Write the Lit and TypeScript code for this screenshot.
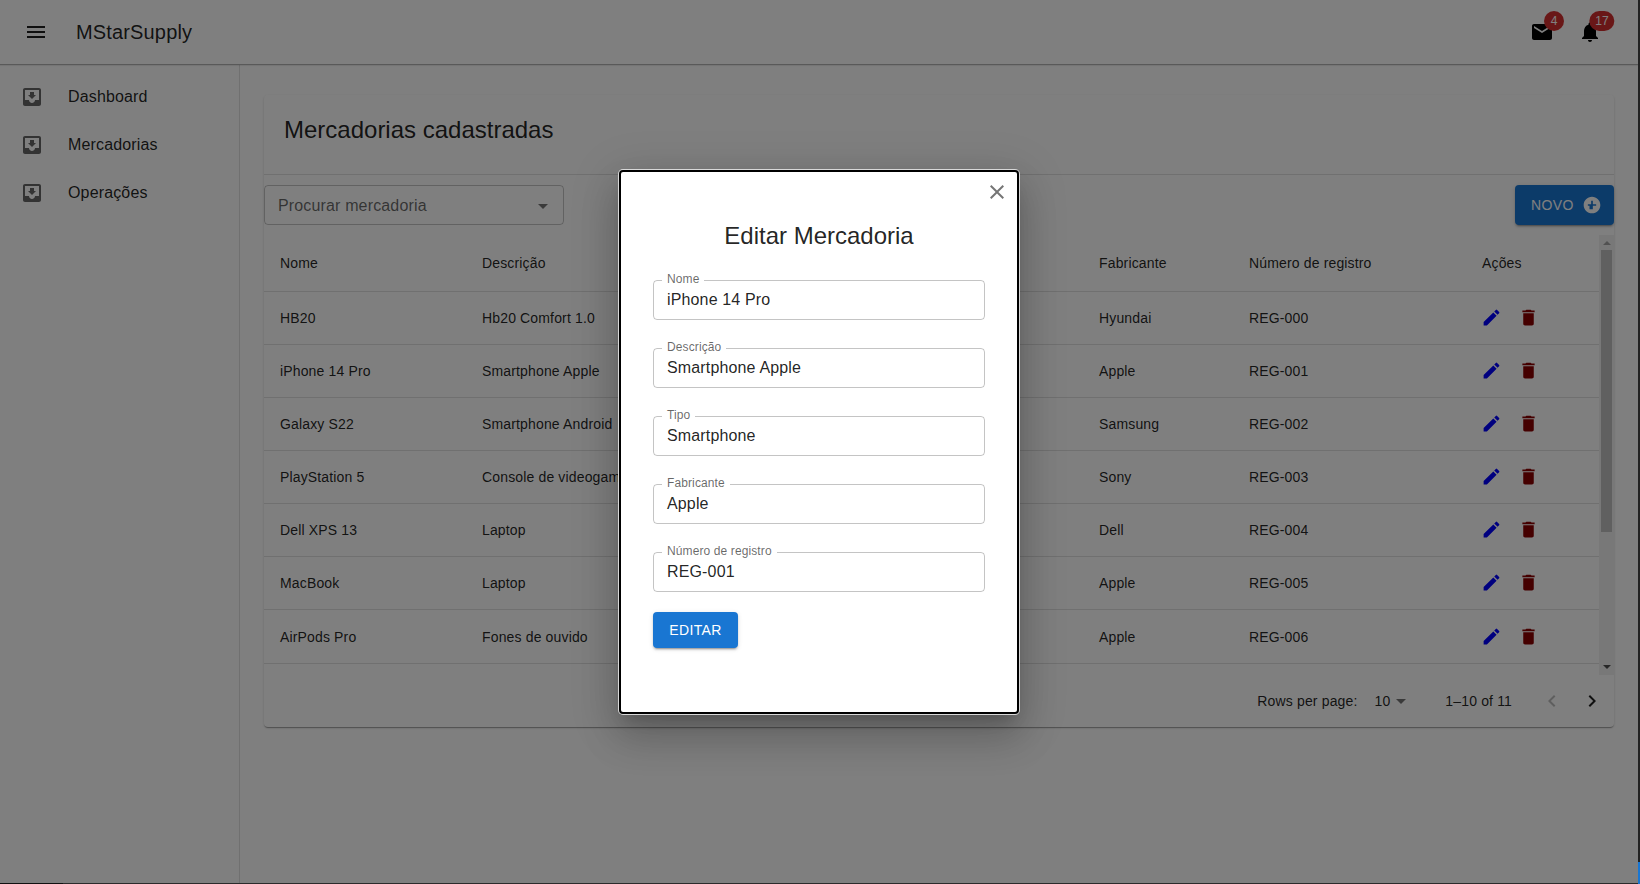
import { LitElement, html, css, svg } from "lit";
import { customElement } from "lit/decorators.js";

const icon = (d: string, cls = "") =>
  html`<svg class="icon ${cls}" viewBox="0 0 24 24">${svg`<path d=${d}></path>`}</svg>`;

const MENU = "M3 18h18v-2H3v2zm0-5h18v-2H3v2zm0-7v2h18V6H3z";
const INBOX =
  "M19 3H4.99c-1.11 0-1.98.89-1.98 2L3 19c0 1.1.88 2 1.99 2H19c1.1 0 2-.9 2-2V5c0-1.11-.9-2-2-2zm0 12h-4c0 1.66-1.35 3-3 3s-3-1.34-3-3H4.99V5H19v10zm-3-5h-2V7h-4v3H8l4 4 4-4z";
const MAIL =
  "M20 4H4c-1.1 0-1.99.9-1.99 2L2 18c0 1.1.9 2 2 2h16c1.1 0 2-.9 2-2V6c0-1.1-.9-2-2-2zm0 4l-8 5-8-5V6l8 5 8-5v2z";
const BELL =
  "M12 22c1.1 0 2-.9 2-2h-4c0 1.1.89 2 2 2zm6-6v-5c0-3.07-1.64-5.64-4.5-6.32V4c0-.83-.67-1.5-1.5-1.5s-1.5.67-1.5 1.5v.68C7.63 5.36 6 7.92 6 11v5l-2 2v1h16v-1l-2-2z";
const EDIT =
  "M3 17.25V21h3.75L17.81 9.94l-3.75-3.75L3 17.25zM20.71 7.04c.39-.39.39-1.02 0-1.41l-2.34-2.34a.9959.9959 0 0 0-1.41 0l-1.83 1.83 3.75 3.75 1.83-1.83z";
const TRASH = "M6 19c0 1.1.9 2 2 2h8c1.1 0 2-.9 2-2V7H6v12zM19 4h-3.5l-1-1h-5l-1 1H5v2h14V4z";
const CLOSE =
  "M19 6.41 17.59 5 12 10.59 6.41 5 5 6.41 10.59 12 5 17.59 6.41 19 12 13.41 17.59 19 19 17.59 13.41 12z";
const ADD = "M12 2C6.48 2 2 6.48 2 12s4.48 10 10 10 10-4.48 10-10S17.52 2 12 2zm5 11h-4v4h-4v-4H7v-2h4V7h2v4h4v2z";
const DROP = "M7 10l5 5 5-5z";
const LEFT = "M15.41 16.59 10.83 12l4.58-4.59L14 6l-6 6 6 6 1.41-1.41z";
const RIGHT = "M8.59 16.59 13.17 12 8.59 7.41 10 6l6 6-6 6-1.41-1.41z";

const NAV = ["Dashboard", "Mercadorias", "Operações"];

const ROWS = [
  ["HB20", "Hb20 Comfort 1.0", "Hyundai", "REG-000"],
  ["iPhone 14 Pro", "Smartphone Apple", "Apple", "REG-001"],
  ["Galaxy S22", "Smartphone Android", "Samsung", "REG-002"],
  ["PlayStation 5", "Console de videogame", "Sony", "REG-003"],
  ["Dell XPS 13", "Laptop", "Dell", "REG-004"],
  ["MacBook", "Laptop", "Apple", "REG-005"],
  ["AirPods Pro", "Fones de ouvido", "Apple", "REG-006"],
];

const FIELDS = [
  ["Nome", "iPhone 14 Pro"],
  ["Descrição", "Smartphone Apple"],
  ["Tipo", "Smartphone"],
  ["Fabricante", "Apple"],
  ["Número de registro", "REG-001"],
];

@customElement("app-root")
export class AppRoot extends LitElement {
  static styles = css`
    :host {
      display: block;
      position: relative;
      width: 1640px;
      height: 884px;
      overflow: hidden;
      background: #fff;
      color: rgba(0, 0, 0, 0.87);
      font-family: "Liberation Sans", Arial, sans-serif;
      font-size: 14px;
      letter-spacing: 0.15px;
    }
    .icon {
      display: block;
      width: 24px;
      height: 24px;
      fill: currentColor;
      flex: none;
    }

    .appbar {
      height: 64px;
      display: flex;
      align-items: center;
      padding: 0 38px 0 24px;
      border-bottom: 1px solid rgba(0, 0, 0, 0.3);
      box-shadow: 0 1px 1px rgba(0, 0, 0, 0.08);
      position: relative;
    }
    .appbar__title {
      font-size: 20px;
      margin-left: 28px;
      flex: 1;
    }
    .appbar__action {
      position: relative;
      margin-left: 24px;
      color: #000;
    }
    .badge {
      position: absolute;
      top: -9px;
      left: 24px;
      transform: translateX(-50%);
      min-width: 20px;
      height: 20px;
      padding: 0 6px;
      box-sizing: border-box;
      border-radius: 10px;
      background: #d32f2f;
      color: #fff;
      font-size: 12px;
      line-height: 20px;
      letter-spacing: 0;
      text-align: center;
    }

    .layout {
      display: flex;
      height: 819px;
    }
    .drawer {
      width: 240px;
      box-sizing: border-box;
      border-right: 1px solid rgba(0, 0, 0, 0.12);
      padding-top: 8px;
      flex: none;
    }
    .nav-item {
      height: 48px;
      display: flex;
      align-items: center;
      gap: 24px;
      padding-left: 20px;
      font-size: 16px;
    }
    .nav-item .icon {
      color: rgba(0, 0, 0, 0.6);
    }

    .main {
      flex: 1;
      padding: 30px 26px 0 24px;
    }
    .card {
      border-radius: 4px;
      box-shadow: 0 2px 1px -1px rgba(0, 0, 0, 0.2), 0 1px 1px 0 rgba(0, 0, 0, 0.14), 0 1px 3px 0 rgba(0, 0, 0, 0.12);
    }
    .card__title {
      height: 80px;
      box-sizing: border-box;
      display: flex;
      align-items: center;
      padding: 0 0 10px 20px;
      font-size: 24px;
      letter-spacing: 0;
      border-bottom: 1px solid rgba(0, 0, 0, 0.12);
    }
    .toolbar {
      height: 60px;
      padding-top: 10px;
      box-sizing: border-box;
      display: flex;
      justify-content: space-between;
      align-items: flex-start;
    }
    .select {
      width: 300px;
      height: 40px;
      box-sizing: border-box;
      display: flex;
      align-items: center;
      justify-content: space-between;
      padding: 1px 8px 0 13px;
      border: 1px solid rgba(0, 0, 0, 0.23);
      border-radius: 4px;
      font-size: 16px;
      color: rgba(0, 0, 0, 0.6);
    }
    .select .icon {
      color: rgba(0, 0, 0, 0.54);
    }
    .btn {
      display: flex;
      align-items: center;
      box-sizing: border-box;
      background: #1976d2;
      color: #fff;
      border-radius: 4px;
      font-size: 14px;
      letter-spacing: 0.4px;
      padding: 0 16px;
      box-shadow: 0 3px 1px -2px rgba(0, 0, 0, 0.2), 0 2px 2px 0 rgba(0, 0, 0, 0.14), 0 1px 5px 0 rgba(0, 0, 0, 0.12);
    }
    .btn--new {
      height: 40px;
      width: 99px;
      gap: 8px;
    }
    .btn--new .icon {
      width: 20px;
      height: 20px;
    }
    .btn--edit {
      height: 36px;
      width: 85px;
      justify-content: center;
      padding: 0;
    }

    .table-wrap {
      display: flex;
      height: 440px;
      overflow: hidden;
    }
    .table {
      flex: 1;
    }
    .row {
      display: grid;
      grid-template-columns: 202px 617px 150px 233px 133px;
      height: 53px;
      box-sizing: border-box;
      align-items: center;
      border-bottom: 1px solid rgba(224, 224, 224, 1);
    }
    .row:last-child {
      height: 54px;
    }
    .row--head {
      height: 57px;
    }
    .row > div {
      padding-left: 16px;
      white-space: nowrap;
    }
    .row > .actions {
      display: flex;
      gap: 16px;
      padding-left: 15px;
      margin-top: -1px;
    }
    .actions .icon {
      width: 21px;
      height: 21px;
    }
    .pencil {
      color: #0000ff;
    }
    .trash {
      color: #8b0000;
    }
    .scrollbar {
      width: 15px;
      background: #f1f1f1;
      display: flex;
      flex-direction: column;
      align-items: stretch;
      flex: none;
    }
    .scrollbar__btn {
      height: 15px;
      display: flex;
      align-items: center;
      justify-content: center;
    }
    .arrow-up,
    .arrow-down {
      width: 0;
      height: 0;
      border-left: 4px solid transparent;
      border-right: 4px solid transparent;
    }
    .arrow-up {
      border-bottom: 4px solid #a3a3a3;
    }
    .arrow-down {
      border-top: 4px solid #505050;
      margin-bottom: 2px;
    }
    .scrollbar__thumb {
      height: 282px;
      background: #c1c1c1;
      margin: 0 2px;
    }
    .scrollbar__rest {
      flex: 1;
    }

    .pager {
      height: 52px;
      display: flex;
      align-items: center;
      justify-content: flex-end;
      padding-right: 10px;
    }
    .pager__size {
      display: flex;
      align-items: center;
      margin: 0 32px 0 17px;
    }
    .pager__size .icon {
      color: rgba(0, 0, 0, 0.54);
      margin-left: -1px;
    }
    .pager__nav {
      display: flex;
      gap: 16px;
      margin-left: 28px;
    }
    .pager__nav .off {
      color: rgba(0, 0, 0, 0.26);
    }

    .overlay {
      position: absolute;
      inset: 0 2px 0 0;
      background: rgba(0, 0, 0, 0.5);
      display: flex;
      align-items: center;
      justify-content: center;
    }
    .modal {
      position: relative;
      width: 400px;
      height: 544px;
      box-sizing: border-box;
      padding: 32px;
      background: #fff;
      border: 2px solid #000;
      border-radius: 4px;
      box-shadow: 0 0 0 1px #d8d8d8, 0 11px 15px -7px rgba(0, 0, 0, 0.2), 0 24px 38px 3px rgba(0, 0, 0, 0.14), 0 9px 46px 8px rgba(0, 0, 0, 0.12);
    }
    .modal__close {
      position: absolute;
      top: 8px;
      right: 8px;
      color: rgba(0, 0, 0, 0.54);
    }
    .modal__title {
      height: 36px;
      line-height: 36px;
      margin: 14px 0 26px;
      text-align: center;
      font-size: 24px;
      letter-spacing: 0;
    }
    .fields {
      display: flex;
      flex-direction: column;
      gap: 28px;
      margin-bottom: 20px;
    }
    .field {
      position: relative;
      height: 40px;
      box-sizing: border-box;
      display: flex;
      align-items: center;
      padding-left: 13px;
      border: 1px solid rgba(0, 0, 0, 0.23);
      border-radius: 4px;
      font-size: 16px;
    }
    .field__label {
      position: absolute;
      top: -8px;
      left: 8px;
      padding: 0 5px;
      background: #fff;
      font-size: 12px;
      line-height: 12px;
      letter-spacing: 0.11px;
      color: rgba(0, 0, 0, 0.6);
    }

    .edge-right {
      position: absolute;
      top: 0;
      right: 0;
      width: 2px;
      height: 862px;
      background: #222;
    }
    .edge-blue {
      position: absolute;
      top: 862px;
      right: 0;
      width: 2px;
      height: 22px;
      background: #1976d2;
    }
    .edge-bottom {
      position: absolute;
      left: 0;
      bottom: 0;
      width: 1638px;
      height: 1px;
      background: linear-gradient(90deg, #111 63px, #2b2b2b 63px);
    }
  `;

  render() {
    return html`
      <header class="appbar">
        ${icon(MENU)}
        <div class="appbar__title">MStarSupply</div>
        <div class="appbar__action">${icon(MAIL)}<span class="badge">4</span></div>
        <div class="appbar__action">${icon(BELL)}<span class="badge">17</span></div>
      </header>
      <div class="layout">
        <nav class="drawer">
          ${NAV.map((n) => html`<div class="nav-item">${icon(INBOX)}<span>${n}</span></div>`)}
        </nav>
        <main class="main">
          <section class="card">
            <div class="card__title">Mercadorias cadastradas</div>
            <div class="toolbar">
              <div class="select"><span>Procurar mercadoria</span>${icon(DROP)}</div>
              <div class="btn btn--new"><span>NOVO</span>${icon(ADD)}</div>
            </div>
            <div class="table-wrap">
              <div class="table">
                <div class="row row--head">
                  <div>Nome</div>
                  <div>Descrição</div>
                  <div>Fabricante</div>
                  <div>Número de registro</div>
                  <div>Ações</div>
                </div>
                ${ROWS.map(
                  (r) => html`<div class="row">
                    ${r.map((c) => html`<div>${c}</div>`)}
                    <div class="actions">${icon(EDIT, "pencil")}${icon(TRASH, "trash")}</div>
                  </div>`
                )}
              </div>
              <div class="scrollbar">
                <div class="scrollbar__btn"><i class="arrow-up"></i></div>
                <div class="scrollbar__thumb"></div>
                <div class="scrollbar__rest"></div>
                <div class="scrollbar__btn"><i class="arrow-down"></i></div>
              </div>
            </div>
            <div class="pager">
              <span>Rows per page:</span>
              <div class="pager__size"><span>10</span>${icon(DROP)}</div>
              <span>1–10 of 11</span>
              <div class="pager__nav">${icon(LEFT, "off")}${icon(RIGHT)}</div>
            </div>
          </section>
        </main>
      </div>
      <div class="overlay">
        <div class="modal">
          <div class="modal__close">${icon(CLOSE)}</div>
          <div class="modal__title">Editar Mercadoria</div>
          <div class="fields">
            ${FIELDS.map(
              ([label, value]) => html`<div class="field">
                <span class="field__label">${label}</span><span>${value}</span>
              </div>`
            )}
          </div>
          <div class="btn btn--edit">EDITAR</div>
        </div>
      </div>
      <div class="edge-right"></div>
      <div class="edge-blue"></div>
      <div class="edge-bottom"></div>
    `;
  }
}
